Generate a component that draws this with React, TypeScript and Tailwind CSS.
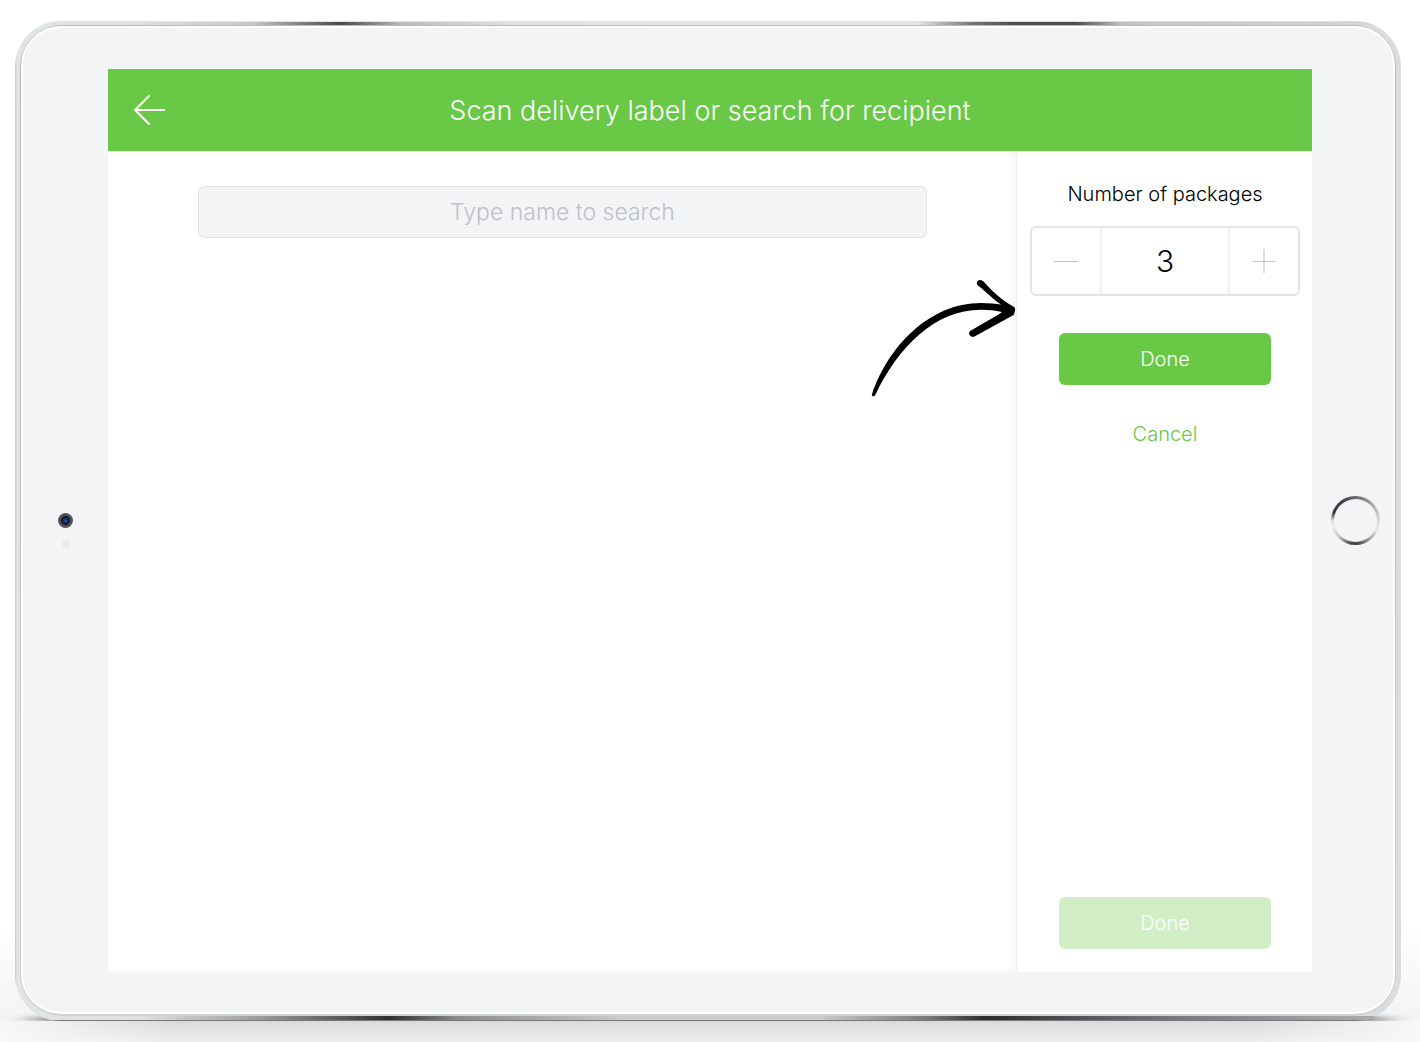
import { useState } from "react";

function BackIcon() {
  return (
    <svg width="32" height="32" viewBox="0 0 32 32" fill="none" stroke="white" strokeWidth="2" aria-hidden="true">
      <path d="M16.5 1.5 2 16l14.5 14.5M2 16h30" />
    </svg>
  );
}

function MinusIcon() {
  return (
    <svg width="24" height="24" viewBox="0 0 24 24" stroke="#c4c6c9" strokeWidth="1.2" aria-hidden="true">
      <path d="M0 12.5h24" />
    </svg>
  );
}

function PlusIcon() {
  return (
    <svg width="24" height="24" viewBox="0 0 24 24" stroke="#c4c6c9" strokeWidth="1.2" aria-hidden="true">
      <path d="M0 12.5h24M12 0v24" />
    </svg>
  );
}

function PointerArrow() {
  return (
    <svg
      className="pointer-events-none absolute top-[126px] right-0"
      width="145"
      height="120"
      viewBox="872 278 145 120"
      aria-hidden="true"
    >
      <path
        d="M873 394.2C889 347 930 303 982 303C990 303 997 303.8 1002 304.6C993 298 984 289 978.8 285.4C975.5 281.5 981 277.500 984.6 281.600C992 290 1002 300 1015.200 307C1017 309 1015.800 312 1014.600 315L975.500 336.600C970.800 338.300 968 332.600 972 330.400L999.500 314.500L1003 312C996 310.600 990 309.700 982 309.700C936 309.700 899 347 876.200 395.200C875 397 872 396.300 873 394.200Z"
        fill="black"
      />
    </svg>
  );
}

function Stepper({ value, onChange }: { value: number; onChange: (n: number) => void }) {
  return (
    <div className="mt-4 flex h-[70px] w-full overflow-hidden rounded-md border-2 border-[#e2e4e5]">
      <button
        type="button"
        aria-label="Remove a package"
        className="flex w-[70px] shrink-0 items-center justify-center border-r-2 border-[#eff0f1]"
        onClick={() => onChange(Math.max(0, value - 1))}
      >
        <MinusIcon />
      </button>
      <input
        id="packages"
        inputMode="numeric"
        className="min-w-0 flex-1 bg-transparent pt-px text-center text-[30px] font-light text-black outline-none"
        value={value}
        onChange={(e) => onChange(Number(e.target.value) || 0)}
      />
      <button
        type="button"
        aria-label="Add a package"
        className="flex w-[70px] shrink-0 items-center justify-center border-l-2 border-[#eff0f1]"
        onClick={() => onChange(value + 1)}
      >
        <PlusIcon />
      </button>
    </div>
  );
}

function Screen() {
  const [count, setCount] = useState(3);
  const [name, setName] = useState("");
  return (
    <div className="flex min-w-0 flex-col bg-white">
      <header className="grid h-[83px] grid-cols-[82px_1fr_82px] items-center border-b border-[#eef3ec] bg-[#69c845] bg-clip-padding">
        <button type="button" aria-label="Back" className="flex justify-center">
          <BackIcon />
        </button>
        <h1 className="pt-px text-center text-[27px] leading-10 font-light text-white">
          Scan delivery label or search for recipient
        </h1>
      </header>
      <div className="flex flex-1">
        <main className="relative min-w-0 flex-1 bg-[linear-gradient(to_left,#f8f8f8,transparent_8px),linear-gradient(to_bottom,#fafafa,transparent_6px),linear-gradient(to_top,#fafafa,transparent_6px)] pr-[89px] pl-[90px] pt-[34px]">
          <input
            type="text"
            aria-label="Recipient name"
            placeholder="Type name to search"
            className="h-[52px] w-full rounded-md border border-[#e1e3e5] bg-[#f3f4f6] text-center text-[23px] font-light text-black outline-none placeholder:text-[#bfc1c8]"
            value={name}
            onChange={(e) => setName(e.target.value)}
          />
          <PointerArrow />
        </main>
        <aside className="flex w-[296px] shrink-0 flex-col items-center border-l border-[#f0f0f0] bg-white pt-[26px] pr-3 pb-[23px] pl-[13px]">
          <label htmlFor="packages" className="text-[20px] leading-8 font-light text-black">
            Number of packages
          </label>
          <Stepper value={count} onChange={setCount} />
          <button
            type="button"
            className="mt-[37px] h-[52px] w-[212px] rounded-md bg-[#69c845] text-[20px] font-light text-white"
          >
            Done
          </button>
          <button type="button" className="mt-[33px] text-[20px] leading-8 font-light text-[#69c845]">
            Cancel
          </button>
          <button
            type="button"
            disabled
            className="mt-auto h-[52px] w-[212px] rounded-md bg-[#d2eec6] text-[20px] font-light text-white"
          >
            Done
          </button>
        </aside>
      </div>
    </div>
  );
}

function Camera() {
  return (
    <div className="flex items-center justify-center">
      <div className="relative size-[15px] rounded-full bg-[radial-gradient(circle,#2456a8_0,#101b45_3px,#17191f_4px,#4b4d50_5px,#55575a_7px)]">
        <div className="absolute top-[27px] left-[4px] size-[8px] rounded-full bg-[#eaebec]" />
      </div>
    </div>
  );
}

function HomeButton() {
  return (
    <div className="flex items-center justify-center pl-[6px]">
      <button
        type="button"
        aria-label="Home"
        className="size-[49px] rounded-full bg-[conic-gradient(#66666a,#a5a5a7_45deg,#dcdcdc_90deg,#e8e8e8_115deg,#aaaaaa_140deg,#444446_175deg,#48484a_190deg,#c5c5c5_225deg,#eeeeee_255deg,#d8d8d8_270deg,#38383c_290deg,#3a3a3e_320deg,#66666a)] p-[3px]"
      >
        <span className="block size-full rounded-full bg-[#f3f4f6]" />
      </button>
    </div>
  );
}

export default function App() {
  return (
    <div className="relative flex min-h-screen flex-col bg-[linear-gradient(to_top,#f1f1f1,transparent_120px)] bg-white pt-[21px] font-[Inter,'Liberation_Sans',sans-serif]">
      <div className="absolute right-0 bottom-[15px] left-0 h-[16px] bg-[radial-gradient(closest-side,#444444_92%,transparent_99%)] blur-[2px]" />
      <div className="relative mr-[19px] ml-[15px] flex flex-1 flex-col overflow-hidden rounded-[46px] bg-[linear-gradient(to_right,#c9cccd,#e1e4e4_2px,#dfe2e2_50%,#dadddf)] px-[5px] pt-1 pb-[5px]">
        <div className="absolute inset-x-0 top-px h-[3px] bg-[linear-gradient(to_right,#dfe2e2_8%,#c9c9cb_17%,#47484d_23.500%,#bcbdbf_28%,#e0e2e2_36%,#e6e8e7_65%,#77767b_69%,#4e4e52_72%,#4e4e52_76.500%,#c3c4c6_80%,#d5d7d8)]" />
        <div className="absolute inset-x-0 bottom-0 h-[5px] border-b border-[#777777] bg-[linear-gradient(to_right,#dfe2e2_9%,#9a979b_18%,#555459_24%,#303034_27%,#8d8b8e_32%,#cccccc_44%,#cccccc_58%,#77767a_66%,#2c2c30_70%,#444449_74%,#72757c_83%,#a5a7aa_96%)]" />
        <div className="relative flex flex-1 rounded-[42px] bg-[linear-gradient(to_bottom,#b7b9bb,#bcbec0_50%,#ced1d3)] p-px pb-[2px]">
          <div className="grid flex-1 grid-cols-[85px_1fr_81px] rounded-[40px] border-2 border-white bg-[#f3f4f6] pt-[41px] pb-10">
            <Camera />
            <Screen />
            <HomeButton />
          </div>
        </div>
      </div>
      <div className="relative h-[21px] bg-[linear-gradient(to_right,#f8f8f8,transparent_12%,transparent_88%,#f8f8f8),linear-gradient(to_bottom,#dadada,#eeeeee)]" />
    </div>
  );
}
